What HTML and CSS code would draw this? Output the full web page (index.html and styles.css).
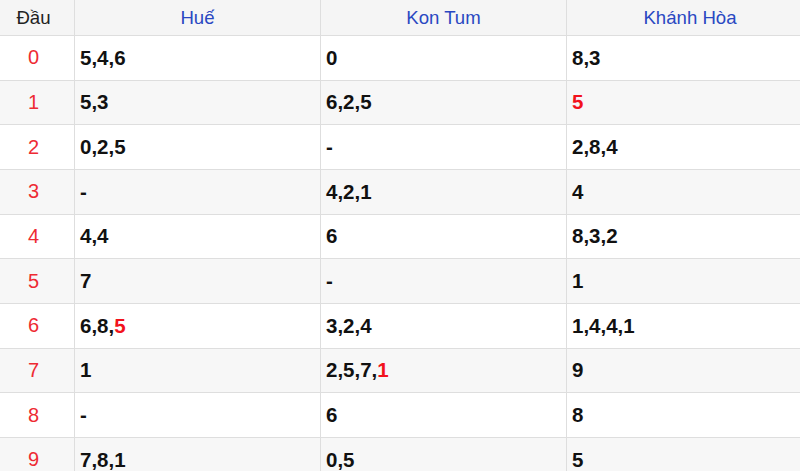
FILE: index.html
```html
<!DOCTYPE html>
<html lang="vi">
<head>
<meta charset="utf-8">
<title>Thống kê đầu</title>
<link rel="stylesheet" href="styles.css">
</head>
<body>
<div class="table">
  <div class="cell head first">Đầu</div>
  <div class="cell head prov">Huế</div>
  <div class="cell head prov">Kon Tum</div>
  <div class="cell head prov">Khánh Hòa</div>

  <div class="cell idx">0</div><div class="cell val">5,4,6</div><div class="cell val">0</div><div class="cell val">8,3</div>
  <div class="cell idx alt">1</div><div class="cell val alt">5,3</div><div class="cell val alt">6,2,5</div><div class="cell val alt"><span class="hot">5</span></div>
  <div class="cell idx">2</div><div class="cell val">0,2,5</div><div class="cell val">-</div><div class="cell val">2,8,4</div>
  <div class="cell idx alt">3</div><div class="cell val alt">-</div><div class="cell val alt">4,2,1</div><div class="cell val alt">4</div>
  <div class="cell idx">4</div><div class="cell val">4,4</div><div class="cell val">6</div><div class="cell val">8,3,2</div>
  <div class="cell idx alt">5</div><div class="cell val alt">7</div><div class="cell val alt">-</div><div class="cell val alt">1</div>
  <div class="cell idx">6</div><div class="cell val">6,8,<span class="hot">5</span></div><div class="cell val">3,2,4</div><div class="cell val">1,4,4,1</div>
  <div class="cell idx alt">7</div><div class="cell val alt">1</div><div class="cell val alt">2,5,7,<span class="hot">1</span></div><div class="cell val alt">9</div>
  <div class="cell idx">8</div><div class="cell val">-</div><div class="cell val">6</div><div class="cell val">8</div>
  <div class="cell idx alt">9</div><div class="cell val alt">7,8,1</div><div class="cell val alt">0,5</div><div class="cell val alt">5</div>
</div>
</body>
</html>
```
FILE: styles.css
```css
html, body {
  margin: 0;
  padding: 0;
  background: #ffffff;
  overflow: hidden;
}
body {
  width: 800px;
  height: 471px;
  font-family: "Liberation Sans", Arial, sans-serif;
}
.table {
  display: grid;
  grid-template-columns: 74px 245px 245px 246px;
  grid-template-rows: 35px repeat(10, 43.67px);
  gap: 1px;
  background: #dedede;
  width: 813px;
}
.cell {
  display: flex;
  align-items: center;
  background: #ffffff;
}
.cell.alt {
  background: #f7f7f7;
}
.head {
  background: #f5f5f5;
  justify-content: center;
  font-size: 18.6px;
  color: #222222;
}
.head.first {
  padding-right: 7px;
}
.head.prov {
  color: #2a48c2;
}
.idx {
  justify-content: center;
  padding-right: 7px;
  font-size: 20px;
  color: #ee2b33;
}
.val {
  padding-left: 5px;
  font-size: 20.5px;
  font-weight: bold;
  color: #111111;
}
.hot {
  color: #f2121c;
}
```
